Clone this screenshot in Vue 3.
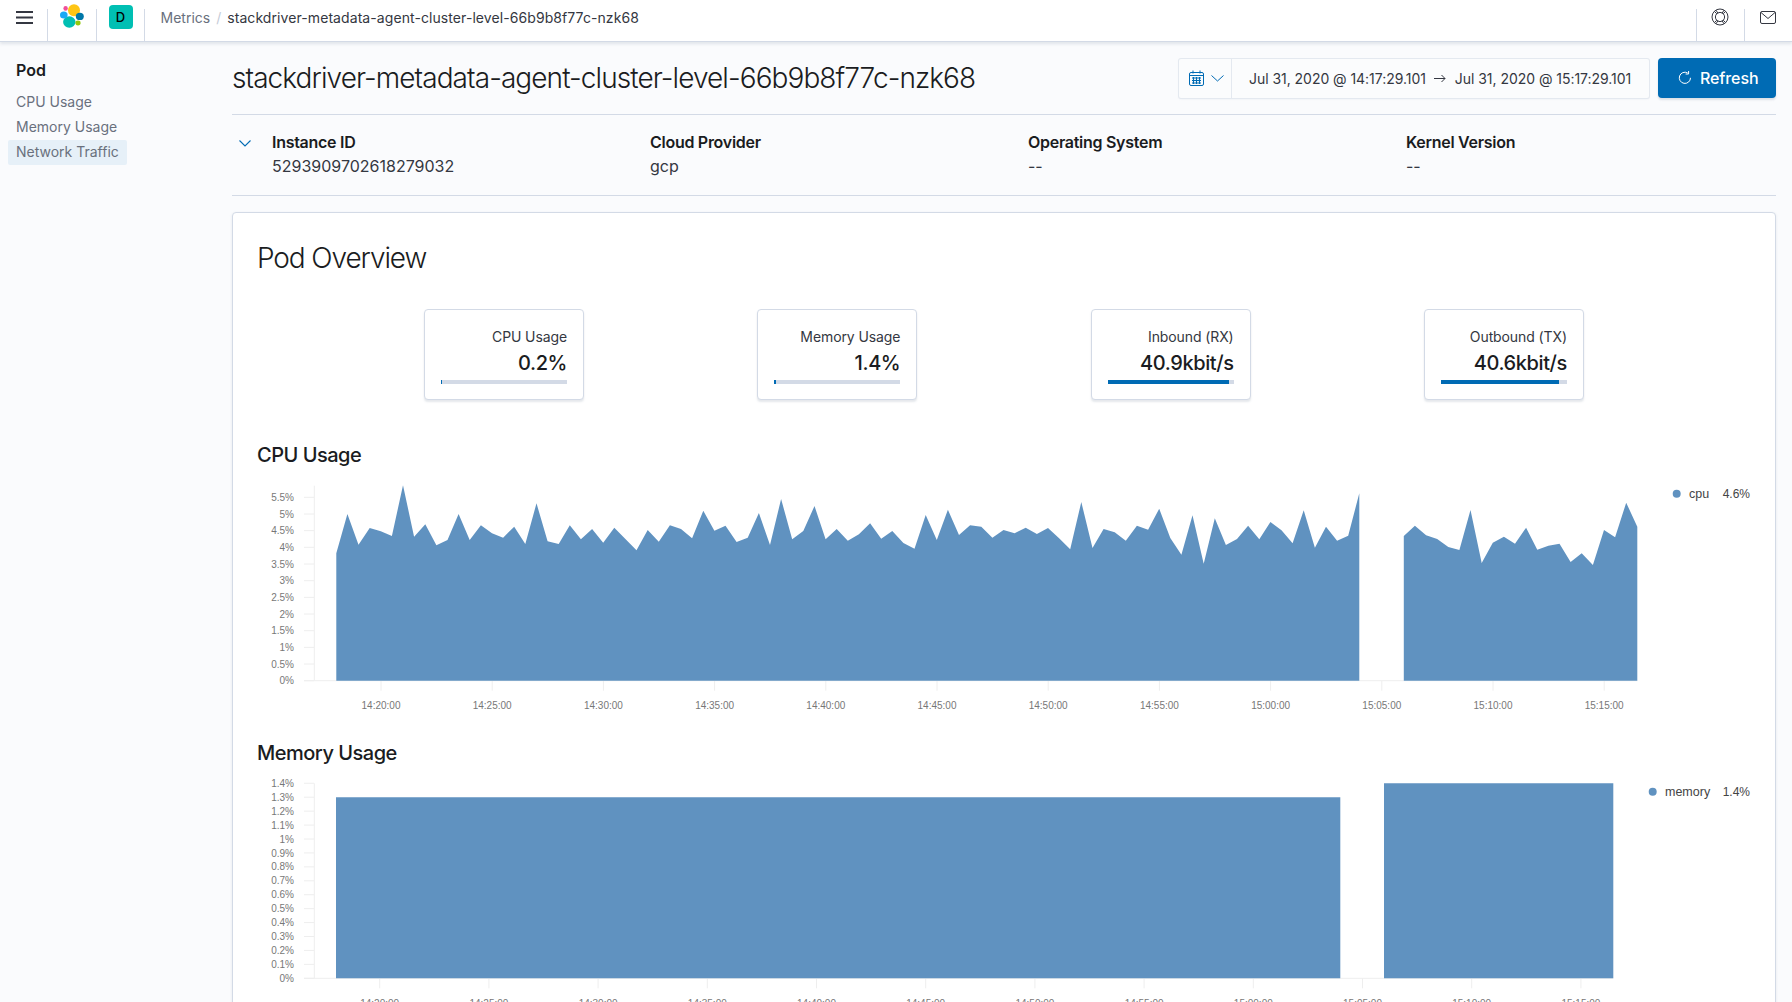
<script setup>
const stats = [
  { label: 'CPU Usage', value: '0.2%', pct: 1 },
  { label: 'Memory Usage', value: '1.4%', pct: 1.6 },
  { label: 'Inbound (RX)', value: '40.9kbit/s', pct: 96 },
  { label: 'Outbound (TX)', value: '40.6kbit/s', pct: 94 }
]

const details = [
  { label: 'Instance ID', value: '5293909702618279032' },
  { label: 'Cloud Provider', value: 'gcp' },
  { label: 'Operating System', value: '--' },
  { label: 'Kernel Version', value: '--' }
]

const minutes = ['14:20', '14:25', '14:30', '14:35', '14:40', '14:45', '14:50', '14:55', '15:00', '15:05', '15:10', '15:15']

// cpu samples, traced from the 30s points of the chart
const cpuA = [
  250, 132, 224, 174, 184, 198, 46, 200, 163, 226, 210, 132, 210, 166, 190, 203, 170, 222, 100, 214,
  222, 166, 208, 177, 218, 173, 207, 241, 180, 215, 166, 177, 205, 122, 182, 167, 216, 203, 129, 225,
  87, 208, 183, 108, 208, 177, 212, 193, 160, 206, 183, 219, 236, 135, 210, 119, 195, 166, 170, 203,
  180, 190, 173, 192, 174, 205, 238, 96, 234, 177, 187, 212, 167, 179, 116, 204, 254, 136, 281, 145,
  225, 207, 167, 208, 156, 181, 220, 121, 233, 170, 212, 197, 70
]
const cpuB = [198, 167, 196, 207, 231, 240, 120, 279, 218, 200, 221, 173, 239, 227, 221, 276, 250, 285, 180, 202, 98, 170]

const cpuBase = 680.7
const areaFrom = (vals, startIdx) => {
  const pts = vals.map((v, i) => `${(336.3 + (startIdx + i) * 11.12).toFixed(1)},${(470 + v / 3).toFixed(1)}`)
  const first = pts[0].split(',')[0]
  const last = pts[pts.length - 1].split(',')[0]
  return `${first},${cpuBase} ${pts.join(' ')} ${last},${cpuBase}`
}

const memBase = 978.3
const charts = [
  {
    title: 'CPU Usage',
    top: 480,
    height: 244,
    base: cpuBase,
    axisTop: 485.7,
    axisEnd: 1637.3,
    yTicks: Array.from({ length: 12 }, (_, i) => ({ y: cpuBase - i * 16.67, label: i * 0.5 + '%' })),
    xTicks: minutes.map((m, i) => ({ x: 381 + i * 111.2, label: m + ':00' })),
    areas: [areaFrom(cpuA, 0), areaFrom(cpuB, 96)],
    legend: { dot: 1676.7, y: 493.7, name: 'cpu', nameX: 1689, value: '4.6%' }
  },
  {
    title: 'Memory Usage',
    top: 775,
    height: 240,
    base: memBase,
    axisTop: 783.3,
    axisEnd: 1613.3,
    yTicks: Array.from({ length: 15 }, (_, i) => ({ y: memBase - i * 13.93, label: i / 10 + '%' })),
    xTicks: minutes.map((m, i) => ({ x: 379.7 + i * 109.2, label: m + ':00' })),
    areas: [
      `336,${memBase} 336,797.3 1340.3,797.3 1340.3,${memBase}`,
      `1384,${memBase} 1384,783.3 1613.3,783.3 1613.3,${memBase}`
    ],
    legend: { dot: 1652.7, y: 791.7, name: 'memory', nameX: 1665, value: '1.4%' }
  }
]
</script>

<template>
  <div class="page">
    <header class="topbar">
      <div class="cell menu">
        <svg width="17" height="13" viewBox="0 0 17 13"><path d="M0 1h17M0 6.5h17M0 12h17" stroke="#343741" stroke-width="2" fill="none" /></svg>
      </div>
      <div class="cell logo">
        <svg width="24" height="24" viewBox="0 0 24 24">
          <circle cx="14" cy="6.3" r="6" fill="#fec514" />
          <ellipse cx="9.3" cy="18" rx="6.2" ry="5.8" fill="#00bfb3" />
          <ellipse cx="5.6" cy="4.4" rx="2.2" ry="2.4" fill="#f04e98" />
          <ellipse cx="3.8" cy="11" rx="3.8" ry="3.6" fill="#1ba9f5" />
          <ellipse cx="19.8" cy="12.4" rx="4" ry="3.6" fill="#0077a8" />
          <ellipse cx="18" cy="19" rx="2.6" ry="2.4" fill="#93c90e" />
        </svg>
      </div>
      <div class="cell space">
        <span class="avatar">D</span>
      </div>
      <nav class="crumbs">
        <span class="crumb-parent">Metrics</span>
        <span class="crumb-slash">/</span>
        <span class="crumb-current">stackdriver-metadata-agent-cluster-level-66b9b8f77c-nzk68</span>
      </nav>
      <div class="cell help">
        <svg width="18" height="18" viewBox="0 0 18 18" fill="none" stroke="#343741" stroke-width="1">
          <circle cx="9" cy="9" r="8" />
          <circle cx="9" cy="9" r="4.6" />
          <path d="M3.4 3.4l2.4 2.4M14.6 3.4l-2.4 2.4M3.4 14.6l2.4-2.4M14.6 14.6l-2.4-2.4M5 2.2l2 3.2M13 2.2l-2 3.2M5 15.8l2-3.2M13 15.8l-2-3.2" />
        </svg>
      </div>
      <div class="cell mail">
        <svg width="16" height="13" viewBox="0 0 16 13" fill="none" stroke="#343741" stroke-width="1">
          <rect x="0.5" y="0.5" width="15" height="12" rx="1.5" />
          <path d="M1 1.5l7 6 7-6" />
        </svg>
      </div>
    </header>

    <div class="body">
      <aside class="sidenav">
        <h3 class="nav-title">Pod</h3>
        <a class="nav-item">CPU Usage</a>
        <a class="nav-item">Memory Usage</a>
        <a class="nav-item active">Network Traffic</a>
      </aside>

      <main class="content">
        <div class="title-row">
          <h1 class="page-title">stackdriver-metadata-agent-cluster-level-66b9b8f77c-nzk68</h1>
          <div class="date-picker">
            <div class="date-quick">
              <svg width="15" height="16" viewBox="0 0 15 16" fill="none" stroke="#006bb4" stroke-width="1">
                <rect x="0.5" y="2.5" width="14" height="13" rx="1.5" />
                <path d="M0.5 5.5h14M4 0.5v3M11 0.5v3" />
                <path d="M3 8h9M3 10.5h9M3 13h9M4.5 7v7M7.5 7v7M10.5 7v7" stroke-width="1.1" />
              </svg>
              <svg width="13" height="7" viewBox="0 0 13 7" fill="none" stroke="#006bb4" stroke-width="1"><path d="M0.5 0.5l6 5.5 6-5.5" /></svg>
            </div>
            <div class="date-range">
              <span>Jul 31, 2020 @ 14:17:29.101</span>
              <svg width="12" height="9" viewBox="0 0 12 9" fill="none" stroke="#343741" stroke-width="1"><path d="M0 4.5h11M7.5 1l3.5 3.5L7.5 8" /></svg>
              <span>Jul 31, 2020 @ 15:17:29.101</span>
            </div>
          </div>
          <button class="refresh">
            <svg width="13" height="13" viewBox="0 0 13 13" fill="none" stroke="#fff" stroke-width="1"><path d="M9.6 1.9a5.6 5.6 0 1 0 2.9 4.9" /><path d="M10.6 0v3H7.6" /></svg>
            Refresh
          </button>
        </div>

        <div class="details">
          <svg class="details-toggle" width="12" height="7" viewBox="0 0 12 7" fill="none" stroke="#006bb4" stroke-width="1.1"><path d="M0.5 0.5L6 6l5.5-5.5" /></svg>
          <div v-for="d in details" :key="d.label" class="detail">
            <div class="detail-label">{{ d.label }}</div>
            <div class="detail-value">{{ d.value }}</div>
          </div>
        </div>

        <section class="panel">
          <h2 class="panel-title">Pod Overview</h2>
          <div class="stats">
            <div v-for="s in stats" :key="s.label" class="stat">
              <div class="stat-label">{{ s.label }}</div>
              <div class="stat-value">{{ s.value }}</div>
              <div class="stat-bar"><div class="stat-fill" :style="{ width: s.pct + '%' }"></div></div>
            </div>
          </div>

          <div v-for="c in charts" :key="c.title" class="chart">
            <h3 class="chart-title">{{ c.title }}</h3>
            <svg class="chart-svg" width="1542" :height="c.height" :viewBox="`233 ${c.top} 1542 ${c.height}`">
              <line x1="314.3" x2="314.3" :y1="c.axisTop" :y2="c.base" class="grid" />
              <line x1="304" :x2="c.axisEnd" :y1="c.base" :y2="c.base" class="grid" />
              <g v-for="t in c.yTicks" :key="t.label">
                <line x1="304" x2="314" :y1="t.y" :y2="t.y" class="grid" />
                <text x="294" :y="t.y + 3.6" text-anchor="end" class="tick">{{ t.label }}</text>
              </g>
              <g v-for="t in c.xTicks" :key="t.label">
                <line :x1="t.x" :x2="t.x" :y1="c.base" :y2="c.base + 10" class="grid" />
                <text :x="t.x" :y="c.base + 28.2" text-anchor="middle" class="tick">{{ t.label }}</text>
              </g>
              <polygon v-for="(a, i) in c.areas" :key="i" :points="a" class="area" />
              <circle :cx="c.legend.dot" :cy="c.legend.y" r="4" fill="#6092c0" />
              <text :x="c.legend.nameX" :y="c.legend.y + 4.2" class="legend">{{ c.legend.name }}</text>
              <text x="1750" :y="c.legend.y + 4.2" text-anchor="end" class="legend-value">{{ c.legend.value }}</text>
            </svg>
          </div>
        </section>
      </main>
    </div>
  </div>
</template>

<style>
html, body {
  margin: 0;
  overflow: hidden;
  background: #fafbfd;
}
</style>

<style scoped>
.page {
  height: 100vh;
  overflow: hidden;
  background: #fafbfd;
  font-family: Inter, "Noto Sans", sans-serif;
  color: #343741;
}

.topbar {
  position: relative;
  display: flex;
  height: 41px;
  background: #fff;
  border-bottom: 1px solid #d3dae6;
  box-shadow: 0 2px 3px rgba(152, 162, 179, 0.25);
  box-sizing: content-box;
}

.cell {
  display: flex;
  align-items: flex-start;
  justify-content: center;
  height: 32px;
  margin-top: 9px;
  border-right: 1px solid #d3dae6;
  box-sizing: border-box;
}

.menu { width: 48px; padding: 2px 0 0 1px; }
.logo { width: 48.5px; }
.logo svg { margin-top: -5px; }
.space { width: 48px; padding-left: 1px; }

.avatar {
  display: flex;
  align-items: center;
  justify-content: center;
  width: 24px;
  height: 24px;
  margin-top: -4px;
  border-radius: 4px;
  background: #00bfb3;
  color: #000;
  font-size: 13px;
  font-weight: 500;
}

.crumbs {
  flex: 1;
  display: flex;
  align-items: center;
  height: 34px;
  padding-left: 16px;
  font-size: 14px;
}

.crumb-parent { color: #69707d; }
.crumb-slash { margin: 0 6px; color: #c5ccd8; }
.crumb-current { color: #343741; letter-spacing: 0.08px; }

.help {
  width: 48px;
  border-left: 1px solid #d3dae6;
  border-right: none;
  padding-right: 2px;
}
.help svg { margin-top: -1px; }
.mail {
  width: 47.7px;
  border-left: 1px solid #d3dae6;
  border-right: none;
  justify-content: flex-start;
  padding-left: 15px;
}
.mail svg { margin-top: 2px; }

.body {
  display: flex;
}

.sidenav {
  flex: 0 0 232px;
  padding: 18px 0 0 8px;
  box-sizing: border-box;
}

.nav-title {
  margin: 0 0 9.5px;
  padding-left: 8px;
  font-size: 16px;
  line-height: 20px;
  font-weight: 600;
  color: #1a1c21;
}

.nav-item {
  display: block;
  width: 119px;
  height: 25px;
  padding-left: 8px;
  box-sizing: border-box;
  font-size: 14px;
  line-height: 24px;
  color: #69707d;
  white-space: nowrap;
}

.nav-item.active {
  background: #e6f0f8;
  border-radius: 2px;
}

.content {
  flex: 0 0 1544px;
  min-width: 0;
}

.title-row {
  display: flex;
  align-items: center;
  height: 40px;
  padding: 16px 0 16px;
  border-bottom: 1px solid #d3dae6;
  box-sizing: content-box;
}

.page-title {
  flex: 1;
  min-width: 0;
  margin: 0;
  font-size: 28px;
  font-weight: 300;
  letter-spacing: -0.92px;
  color: #1a1c21;
  white-space: nowrap;
}

.date-picker {
  display: flex;
  width: 470px;
  height: 39px;
  background: #fbfcfd;
  border: 0;
  box-shadow: 0 0 0 1px #e4e9f0, 0 1px 2px rgba(152, 162, 179, 0.2);
  border-radius: 2px;
  font-size: 14px;
}

.date-quick {
  display: flex;
  align-items: center;
  gap: 7px;
  width: 53px;
  padding-left: 10px;
  box-sizing: border-box;
  border-right: 1px solid #e4e9f0;
}

.date-range {
  flex: 1;
  display: flex;
  align-items: center;
  gap: 8.5px;
  padding-left: 17px;
  letter-spacing: -0.04px;
  color: #343741;
  white-space: nowrap;
}

.refresh {
  display: flex;
  align-items: center;
  gap: 9px;
  flex: 0 0 118px;
  height: 40px;
  margin-left: 9px;
  padding: 0 0 1px 20px;
  border: 0;
  border-radius: 4px;
  background: #006bb4;
  box-shadow: 0 2px 2px rgba(152, 162, 179, 0.3);
  color: #fff;
  font-family: inherit;
  font-size: 16px;
  font-weight: 500;
  letter-spacing: -0.1px;
}

.details {
  position: relative;
  display: grid;
  grid-template-columns: repeat(4, 378px);
  height: 80px;
  padding-left: 40px;
  border-bottom: 1px solid #d3dae6;
  box-sizing: content-box;
}

.details-toggle {
  position: absolute;
  left: 7px;
  top: 25px;
}

.detail { padding-top: 16px; }

.detail-label {
  font-size: 16px;
  line-height: 22px;
  font-weight: 600;
  letter-spacing: -0.28px;
  color: #1a1c21;
}

.detail-value {
  margin-top: 1px;
  font-size: 16px;
  line-height: 24px;
  color: #343741;
}

.panel {
  margin-top: 16px;
  height: 800px;
  background: #fff;
  border: 1px solid #d3dae6;
  border-radius: 4px;
  box-shadow: 0 1px 3px rgba(152, 162, 179, 0.2);
}

.panel-title {
  margin: 27px 0 33px 24px;
  font-size: 28px;
  line-height: 36px;
  font-weight: 300;
  letter-spacing: -1.1px;
  color: #1a1c21;
}

.stats {
  display: flex;
  justify-content: center;
  gap: 173.3px;
}

.stat {
  width: 160px;
  height: 91px;
  padding: 17px 16px 0;
  box-sizing: border-box;
  border: 1px solid #d3dae6;
  border-radius: 4px;
  box-shadow: 0 2px 2px rgba(152, 162, 179, 0.25);
  background: #fff;
  text-align: right;
}

.stat-label {
  font-size: 14px;
  line-height: 20px;
  letter-spacing: -0.1px;
  color: #343741;
}

.stat-value {
  margin-top: 4px;
  font-size: 20px;
  line-height: 24px;
  font-weight: 500;
  letter-spacing: -0.4px;
  color: #1a1c21;
}

.stat-bar {
  height: 4px;
  margin-top: 4.5px;
  background: #d3dae6;
}

.stat-fill {
  height: 4px;
  background: #006bb4;
}

.chart-title {
  margin: 41px 0 11px 24px;
  font-size: 20px;
  line-height: 28px;
  font-weight: 500;
  letter-spacing: -0.5px;
  color: #1a1c21;
}

.chart + .chart .chart-title {
  margin-top: 15px;
  margin-bottom: 8px;
}

.chart-svg {
  display: block;
}

.grid {
  stroke: #eeeeee;
  stroke-width: 1;
}

.tick {
  font-family: "Liberation Sans", Arial, sans-serif;
  font-size: 10px;
  fill: #777777;
}

.legend {
  font-family: "Liberation Sans", Arial, sans-serif;
  font-size: 12.5px;
  fill: #444444;
}

.legend-value {
  font-family: "Liberation Sans", Arial, sans-serif;
  font-size: 12px;
  fill: #444444;
}

.area {
  fill: #6092c0;
}
</style>
